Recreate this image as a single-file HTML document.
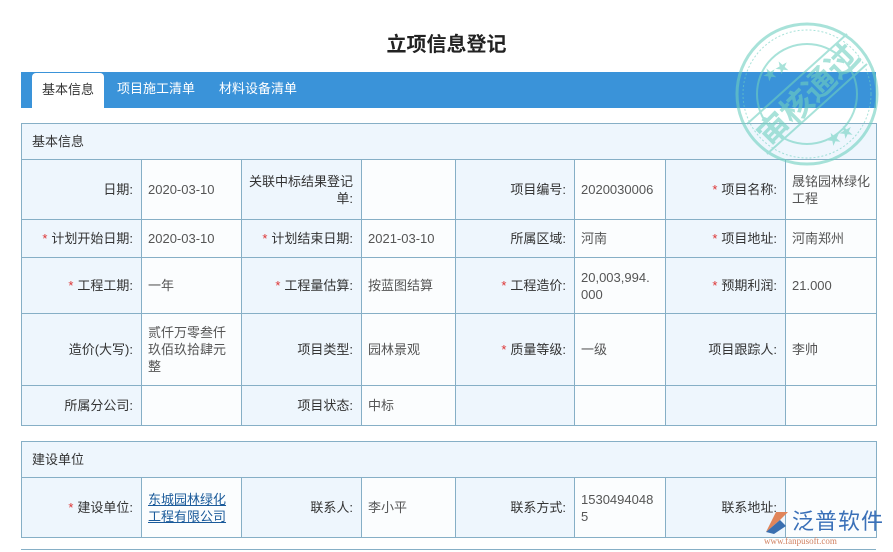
<!DOCTYPE html>
<html><head><meta charset="utf-8"><style>
*{margin:0;padding:0;box-sizing:border-box}
body{width:893px;height:552px;overflow:hidden;background:#fff;font-family:"Liberation Sans","Noto Sans CJK SC",sans-serif;font-size:13px;color:#333;position:relative}
.title{position:absolute;top:28px;left:0;width:893px;text-align:center;font-size:20px;font-weight:bold;color:#222}
.tabs{position:absolute;left:21px;top:72px;width:855px;height:36px;background:#3a93d9}
.tab{position:absolute;top:0;height:36px;line-height:34px;color:#fff;font-size:13px}
.tab.on{background:#fff;color:#333;border-radius:4px 4px 0 0;top:1px;height:35px;left:11px;width:72px;text-align:center}
table{position:absolute;left:21px;border-collapse:collapse;table-layout:fixed;width:855px}
td{border:1px solid #86afc6;line-height:17px;vertical-align:middle}
td.l{background:#eef6fd;text-align:right;padding-right:8px}
td.v{background:#fbfdfe;padding-left:6px;padding-right:2px;word-break:break-all;color:#555}
td.h{background:#eef6fd;padding-left:10px;height:36px}
.s{color:#d33;margin-right:4px}
a{color:#1a5a9a;text-decoration:underline}
</style></head><body>
<div class="title">立项信息登记</div>
<div class="tabs">
<div class="tab on">基本信息</div>
<div class="tab" style="left:96px">项目施工清单</div>
<div class="tab" style="left:198px">材料设备清单</div>
</div>
<table style="top:123px">
<colgroup><col style="width:120px"><col style="width:100px"><col style="width:120px"><col style="width:94px"><col style="width:119px"><col style="width:91px"><col style="width:120px"><col style="width:91px"></colgroup>
<tr><td class="h" colspan="8">基本信息</td></tr>
<tr style="height:60px"><td class="l" style="padding-right:8px;padding-left:4px">日期:</td><td class="v">2020-03-10</td><td class="l" style="padding-right:8px;padding-left:4px">关联中标结果登记单:</td><td class="v"></td><td class="l">项目编号:</td><td class="v">2020030006</td><td class="l"><span class="s">*</span>项目名称:</td><td class="v">晟铭园林绿化工程</td></tr>
<tr style="height:38px"><td class="l"><span class="s">*</span>计划开始日期:</td><td class="v">2020-03-10</td><td class="l"><span class="s">*</span>计划结束日期:</td><td class="v">2021-03-10</td><td class="l">所属区域:</td><td class="v">河南</td><td class="l"><span class="s">*</span>项目地址:</td><td class="v">河南郑州</td></tr>
<tr style="height:56px"><td class="l"><span class="s">*</span>工程工期:</td><td class="v">一年</td><td class="l"><span class="s">*</span>工程量估算:</td><td class="v">按蓝图结算</td><td class="l"><span class="s">*</span>工程造价:</td><td class="v">20,003,994.<br>000</td><td class="l"><span class="s">*</span>预期利润:</td><td class="v">21.000</td></tr>
<tr style="height:72px"><td class="l">造价(大写):</td><td class="v">贰仟万零叁仟<br>玖佰玖拾肆元<br>整</td><td class="l">项目类型:</td><td class="v">园林景观</td><td class="l"><span class="s">*</span>质量等级:</td><td class="v">一级</td><td class="l">项目跟踪人:</td><td class="v">李帅</td></tr>
<tr style="height:40px"><td class="l">所属分公司:</td><td class="v"></td><td class="l">项目状态:</td><td class="v">中标</td><td class="l"></td><td class="v"></td><td class="l"></td><td class="v"></td></tr>
</table>
<table style="top:441px">
<colgroup><col style="width:120px"><col style="width:100px"><col style="width:120px"><col style="width:94px"><col style="width:119px"><col style="width:91px"><col style="width:120px"><col style="width:91px"></colgroup>
<tr><td class="h" colspan="8">建设单位</td></tr>
<tr style="height:60px"><td class="l"><span class="s">*</span>建设单位:</td><td class="v"><a>东城园林绿化<br>工程有限公司</a></td><td class="l">联系人:</td><td class="v">李小平</td><td class="l">联系方式:</td><td class="v">1530494048<br>5</td><td class="l">联系地址:</td><td class="v"></td></tr>
</table>
<div style="position:absolute;left:21px;top:549px;width:855px;border-top:1px solid #86afc6"></div>
<svg style="position:absolute;left:727px;top:14px" width="160" height="160" viewBox="0 0 160 160" opacity="0.6">
<g fill="none" stroke="#6fd0c0">
<circle cx="80" cy="80" r="70" stroke-width="3"/>
<circle cx="80" cy="80" r="64" stroke-width="1" stroke-dasharray="2 2"/>
<circle cx="80" cy="80" r="50" stroke-width="2"/>
<line x1="20" y1="110" x2="120" y2="20" stroke-width="2"/>
<line x1="40" y1="140" x2="140" y2="50" stroke-width="2"/>
</g>
<text x="80" y="93" fill="#6fd0c0" font-size="32" font-weight="bold" text-anchor="middle" transform="rotate(-45 80 80)" font-family="Noto Sans CJK SC,sans-serif">审核通过</text>
<text x="36" y="64" fill="#6fd0c0" font-size="14" transform="rotate(-30 45 60)">★★</text>
<text x="100" y="128" fill="#6fd0c0" font-size="14" transform="rotate(-30 110 124)">★★</text>
</svg>
<div style="position:absolute;left:762px;top:504px;width:130px;height:48px">
<svg width="30" height="30" style="position:absolute;left:0;top:2px" viewBox="0 0 30 30"><path d="M4 26 L14 6 L26 6 L18 14 Z" fill="#e0855a"/><path d="M4 26 L18 14 L24 20 L12 28 Z" fill="#3a6fb0"/></svg>
<div style="position:absolute;left:30px;top:0;font-size:22px;color:#3a70b8;letter-spacing:1px;font-family:'Noto Sans CJK SC',sans-serif">泛普软件</div>
<div style="position:absolute;left:2px;top:32px;font-size:9px;color:#d08060;font-family:'Liberation Serif',serif">www.fanpusoft.com</div>
</div>
</body></html>
